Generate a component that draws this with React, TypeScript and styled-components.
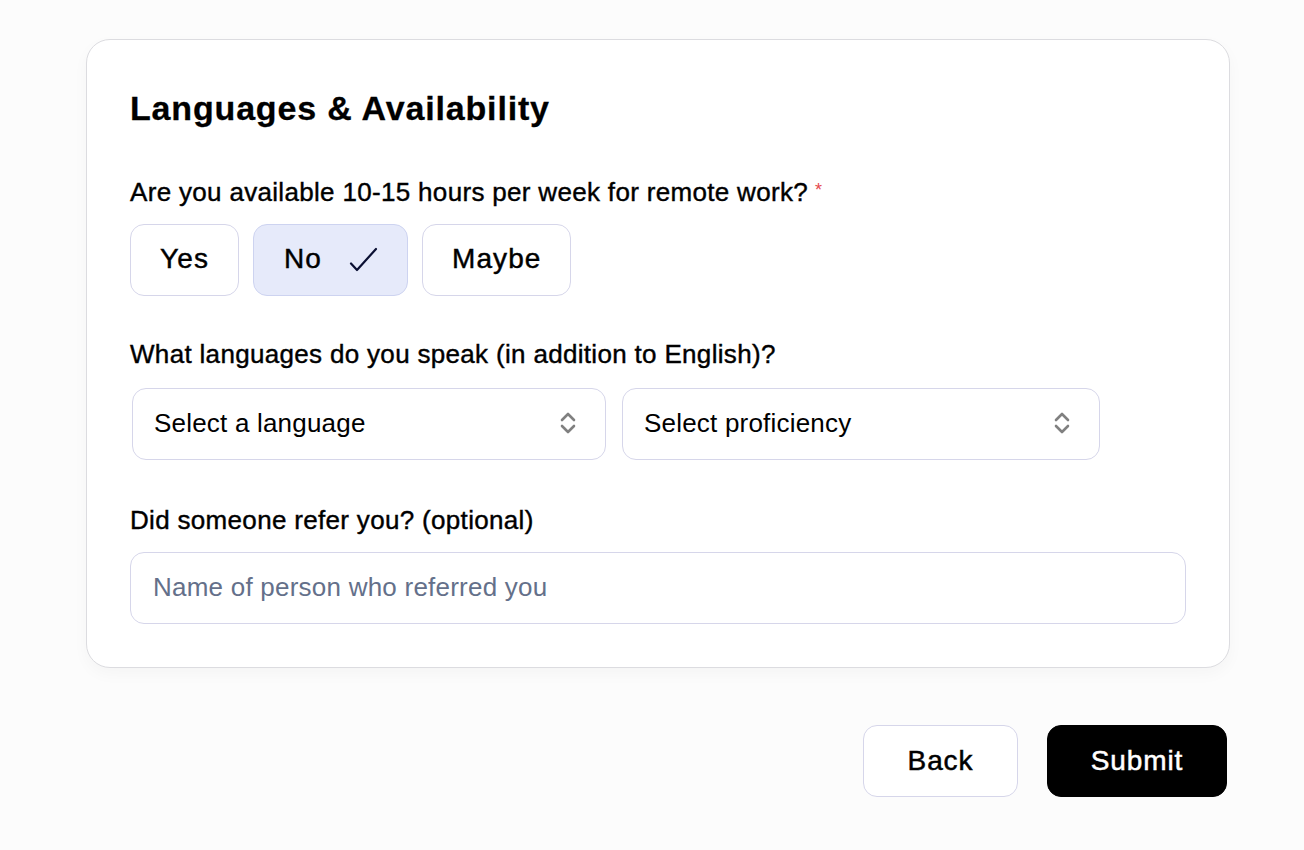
import React from "react";
import styled, { createGlobalStyle } from "styled-components";

const sans = `"Liberation Sans", Arial, sans-serif`;
const Global = createGlobalStyle`
  html, body { margin: 0; padding: 0; background: #fcfcfc; }
  * { box-sizing: border-box; }
  body { font-family: ${sans}; color: #000; font-variant-ligatures: none; }
`;
const Page = styled.div`
  width: 1304px; height: 850px; padding: 39px 74px 0 86px; display: flex; flex-direction: column;
`;
const Card = styled.section`
  width: 1144px; height: 629px; background: #fff; border: 1px solid #dcdce0; border-radius: 24px;
  padding: 47px 43px 0 43px; box-shadow: 0 6px 16px rgba(0,0,0,0.03);
`;
const Title = styled.h1`
  margin: 0; font-size: 34px; line-height: 42px; font-weight: 700; letter-spacing: 0.83px; -webkit-text-stroke: 0.3px #000;
`;
const Label = styled.div<{ $top: number }>`
  margin-top: ${p => p.$top}px; height: 30px; padding-bottom: 2px; font-size: 26px; line-height: 28px;
  font-weight: 400; display: flex; letter-spacing: 0.32px; -webkit-text-stroke: 0.4px #000;
`;
const Star = styled.span`
  color: #e5484d; font-size: 18px; margin-left: 7px; line-height: 24px; letter-spacing: 0; -webkit-text-stroke: 0;
`;
const Options = styled.div`
  display: flex; gap: 14px; margin-top: 16px;
`;
const Option = styled.div<{ $selected?: boolean; $w: number }>`
  width: ${p => p.$w}px; height: 72px; border: 1px solid ${p => p.$selected ? "#cdd3f0" : "#d6d6ea"};
  border-radius: 14px; background: ${p => p.$selected ? "#e6eafa" : "#fff"};
  display: flex; align-items: center; justify-content: space-between;
  padding: ${p => p.$selected ? "0 28px 2px 30px" : "0 29px 2px 29px"};
  font-size: 28px; letter-spacing: 1.1px; -webkit-text-stroke: 0.45px #000;
`;
const Selects = styled.div`
  display: flex; gap: 16px; margin-top: 18px; padding-left: 2px;
`;
const Select = styled.div<{ $w: number }>`
  width: ${p => p.$w}px; height: 72px; border: 1px solid #d6d6ea; border-radius: 14px; background: #fff;
  display: flex; align-items: center; justify-content: space-between; padding: 0 29px 2px 21px;
  font-size: 26px; letter-spacing: 0.2px;
`;
const Field = styled.div`
  width: 1056px; height: 72px; margin-top: 16px; border: 1px solid #d6d6ea; border-radius: 14px;
  display: flex; align-items: center; padding: 0 22px 2px; font-size: 26px; letter-spacing: 0.23px; color: #64708a;
`;
const Actions = styled.div`
  display: flex; justify-content: flex-end; gap: 29px; margin-top: 57px; width: 1141px;
`;
const Button = styled.button<{ $primary?: boolean; $w: number }>`
  width: ${p => p.$w}px; height: 72px; border-radius: 14px; font: 400 28px ${sans}; letter-spacing: 0.9px;
  -webkit-text-stroke: 0.5px ${p => p.$primary ? "#fff" : "#000"};
  border: 1px solid ${p => p.$primary ? "#000" : "#d6d6ea"};
  background: ${p => p.$primary ? "#000" : "#fff"}; color: ${p => p.$primary ? "#fff" : "#000"};
`;
const Check = () => (
  <svg width="30" height="30" viewBox="0 0 30 30" fill="none" stroke="#0b1033" strokeWidth="2.2" strokeLinecap="round" strokeLinejoin="round"><path d="M2 19.5L8 26L27 5" /></svg>
);
const Chevrons = () => (
  <svg width="16" height="22" viewBox="0 0 16 22" fill="none" stroke="#808080" strokeWidth="2.6" strokeLinecap="round" strokeLinejoin="round"><path d="M2 8l6-6 6 6M2 14l6 6 6-6" /></svg>
);
export default function App() {
  return (
    <Page>
      <Global />
      <Card>
        <Title>Languages &amp; Availability</Title>
        <Label $top={49}>Are you available 10-15 hours per week for remote work?<Star>*</Star></Label>
        <Options>
          <Option $w={109}>Yes</Option>
          <Option $w={155} $selected>No<Check /></Option>
          <Option $w={149}>Maybe</Option>
        </Options>
        <Label $top={44}>What languages do you speak (in addition to English)?</Label>
        <Selects>
          <Select $w={474}>Select a language<Chevrons /></Select>
          <Select $w={478}>Select proficiency<Chevrons /></Select>
        </Selects>
        <Label $top={46}>Did someone refer you? (optional)</Label>
        <Field>Name of person who referred you</Field>
      </Card>
      <Actions>
        <Button $w={155}>Back</Button>
        <Button $w={180} $primary>Submit</Button>
      </Actions>
    </Page>
  );
}
